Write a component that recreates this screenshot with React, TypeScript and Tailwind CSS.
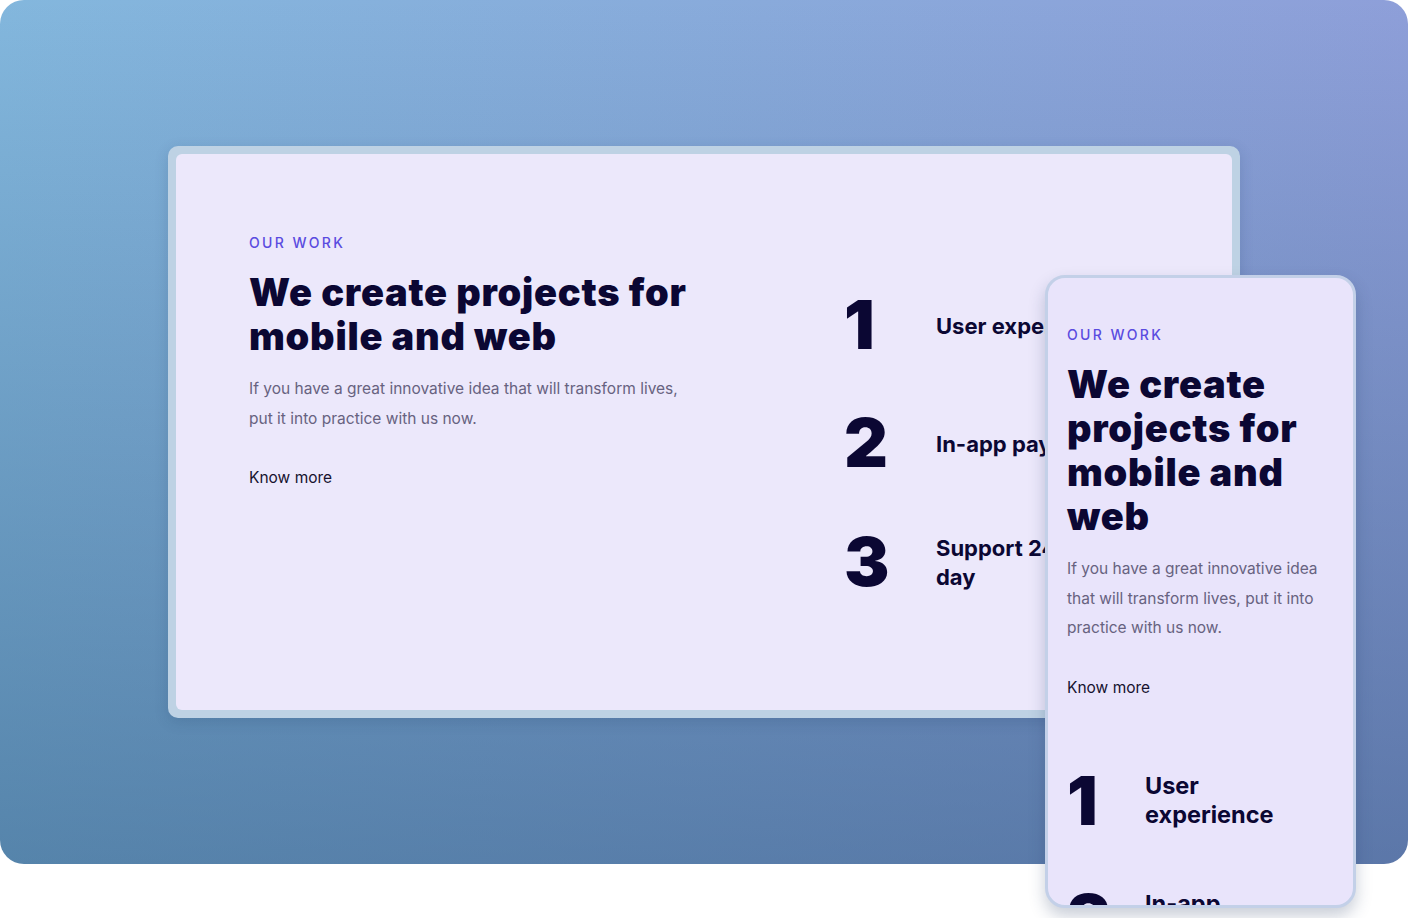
const features = [
  { n: "1", label: ["User experience"] },
  { n: "2", label: ["In-app payments"] },
  { n: "3", label: ["Support 24/7 every", "day"] },
];

const mobileFeatures = [
  { n: "1", label: ["User", "experience"] },
  { n: "2", label: ["In-app", "payments"] },
];

const Intro = ({ mobile }: { mobile?: boolean }) => (
  <div className="flex flex-col">
    <p className="text-[14px] leading-[14px] tracking-[0.17em] text-[#5a4be0] font-medium">
      OUR WORK
    </p>
    <h2
      className={`mt-[20px] font-black text-[#0b0733] tracking-[0.02em] text-[38px] leading-[44px] ${
        mobile ? "w-[262px]" : "w-[470px]"
      }`}
    >
      We create projects for mobile and web
    </h2>
    <p
      className={`mt-[16px] text-[15.5px] leading-[29.5px] text-[#676280] ${
        mobile ? "w-[262px]" : "w-[440px]"
      }`}
    >
      If you have a great innovative idea that will transform lives, put it
      into practice with us now.
    </p>
    <a className="mt-[35px] text-[15.5px] leading-[20px] text-[#17122f]">
      Know more
    </a>
  </div>
);

export default function App() {
  return (
    <div
      className="w-[1408px] h-[918px] bg-white overflow-hidden relative"
      style={{ fontFamily: "Inter, 'Noto Sans', sans-serif" }}
    >
      <div className="h-[864px] rounded-[24px] bg-[linear-gradient(to_bottom,rgba(30,70,110,0)_0%,rgba(30,70,110,0.45)_100%),linear-gradient(to_right,#83b7dd,#8e9fd9)] pt-[146px] pl-[168px]">
        {/* desktop frame */}
        <div className="w-[1072px] h-[572px] rounded-[10px] bg-[#bed2e4] p-[8px] shadow-[0_4px_14px_rgba(30,60,100,0.18)]">
          <div className="h-full rounded-[6px] bg-[#ece8fb] pl-[73px] pt-[82px] flex">
            <Intro />
            <div className="ml-[125px] flex flex-col gap-[58px] pt-[58px]">
              {features.map((f) => (
                <div key={f.n} className="flex items-center">
                  <span className="w-[92px] text-[68px] leading-[60px] font-black text-[#0b0733]">
                    {f.n}
                  </span>
                  <div className="pt-[4px] text-[22px] leading-[29px] font-bold text-[#0b0733] whitespace-nowrap">
                    {f.label.map((l) => (
                      <div key={l}>{l}</div>
                    ))}
                  </div>
                </div>
              ))}
            </div>
          </div>
        </div>
      </div>

      {/* mobile frame */}
      <div className="absolute left-[1045px] top-[275px] w-[311px] h-[633px] rounded-[20px] border-[3px] border-[#c3d0e8] bg-[#e9e4fb] overflow-hidden shadow-[0_8px_16px_rgba(40,60,100,0.25)]">
        <div className="pl-[19px] pt-[50px]">
          <Intro mobile />
          <div className="mt-[72px] flex flex-col gap-[58px]">
            {mobileFeatures.map((f) => (
              <div key={f.n} className="flex items-center">
                <span className="w-[78px] text-[68px] leading-[60px] font-black text-[#0b0733]">
                  {f.n}
                </span>
                <div className="text-[23.5px] leading-[29px] font-bold text-[#0b0733]">
                  {f.label.map((l) => (
                    <div key={l}>{l}</div>
                  ))}
                </div>
              </div>
            ))}
          </div>
        </div>
      </div>
    </div>
  );
}
